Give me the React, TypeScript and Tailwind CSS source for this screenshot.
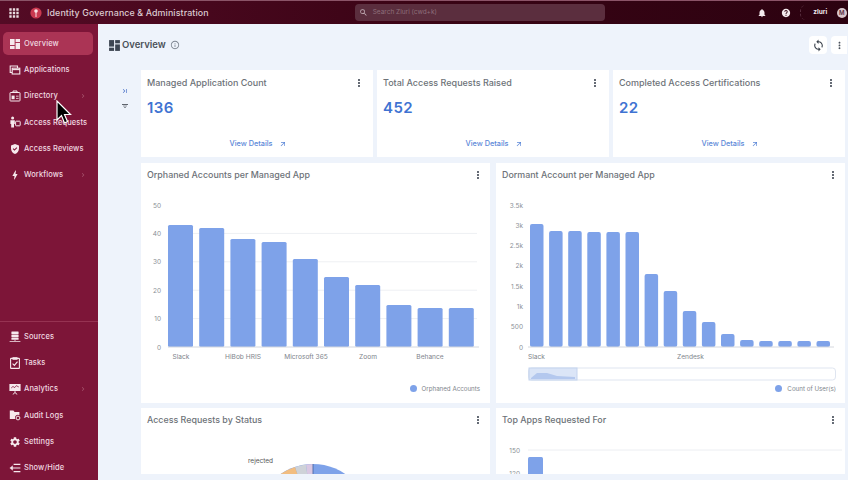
import React from 'react';
import {
  MdApps, MdArrowOutward, MdBolt, MdChevronRight, MdDashboard, MdFilterList,
  MdGppGood, MdHelp, MdInfoOutline, MdLastPage, MdMoreVert, MdNotifications,
  MdSearch, MdSettings, MdSync,
} from 'react-icons/md';

type IconProps = { className?: string };

function AppsIcon({ className }: IconProps) {
  return (
    <svg viewBox="0 0 12 12" className={className} fill="none" stroke="currentColor" strokeWidth="1.1">
      <path d="M3 8.5H1.2V2H8.5V4" />
      <rect x="3.2" y="4.2" width="7.6" height="5.8" fill="#7d1538" />
      <path d="M3.2 5.6H10.8" />
    </svg>
  );
}

function DirectoryIcon({ className }: IconProps) {
  return (
    <svg viewBox="0 0 12 12" className={className} fill="none" stroke="currentColor" strokeWidth="1">
      <path d="M4 2.5V1H8V2.5" />
      <rect x="1" y="2.5" width="10" height="8.5" rx=".6" />
      <rect x="2.6" y="5.6" width="3" height="3.6" fill="currentColor" stroke="none" />
      <path d="M7 6.2H9.6M7 8.4H9.6" strokeWidth=".8" />
    </svg>
  );
}

function RequestsIcon({ className }: IconProps) {
  return (
    <svg viewBox="0 0 12 12" className={className} fill="currentColor">
      <circle cx="3.6" cy="2" r="1.5" />
      <path d="M1.4 4.2H5.8V8H5V11.6H2.2V8H1.4Z" />
      <rect x="6.6" y="5.2" width="4.6" height="4.6" rx=".6" fill="none" stroke="currentColor" strokeWidth="1" />
    </svg>
  );
}

function SourcesIcon({ className }: IconProps) {
  return (
    <svg viewBox="0 0 12 12" className={className} fill="currentColor">
      <rect x="2.4" y=".6" width="7.2" height="2.4" rx=".5" />
      <rect x="2.4" y="3.6" width="7.2" height="2.4" rx=".5" />
      <rect x="2.4" y="6.6" width="7.2" height="2.2" rx=".5" />
      <path d="M5.6 8.8H6.4V10H11.4V10.8H.6V10H5.6Z" />
    </svg>
  );
}

function TasksIcon({ className }: IconProps) {
  return (
    <svg viewBox="0 0 12 12" className={className} fill="none" stroke="currentColor" strokeWidth="1.1">
      <rect x="1.6" y="1.4" width="8.8" height="10" rx=".5" />
      <path d="M4 .8H8V2.2H4Z" fill="currentColor" />
      <path d="M3.6 6.6 5.4 8.4 8.5 4.6" />
    </svg>
  );
}

function AnalyticsIcon({ className }: IconProps) {
  return (
    <svg viewBox="0 0 12 12" className={className} fill="currentColor">
      <path fillRule="evenodd" d="M.4 1H11.6V8H.4ZM2.2 5.6 4 3.8 5.4 5 7.6 3 9.8 4.4V3.8L7.6 2.2 5.4 4.2 4 3 2.2 4.8Z" />
      <path d="M5.6 8H6.4V9.2L8.6 11.4H7.6L6 9.9 4.4 11.4H3.4L5.6 9.2Z" />
    </svg>
  );
}

function AuditIcon({ className }: IconProps) {
  return (
    <svg viewBox="0 0 12 12" className={className} fill="currentColor">
      <path d="M.8 1.6H4.4L5.6 3H10.4V6.2A3 3 0 0 0 6.2 10H.8Z" />
      <circle cx="9" cy="9" r="1.9" fill="none" stroke="currentColor" strokeWidth="1" />
    </svg>
  );
}

function ShowHideIcon({ className }: IconProps) {
  return (
    <svg viewBox="0 0 12 12" className={className} fill="none" stroke="currentColor" strokeWidth="1.2">
      <path d="M4.6 2.4H11.4M3 6H11.4M4.6 9.6H11.4" />
      <path d="M3.6 3.8.8 6 3.6 8.2Z" fill="currentColor" strokeWidth=".4" />
    </svg>
  );
}

function OverviewIcon({ className }: IconProps) {
  return (
    <svg viewBox="0 0 12 12" className={className} fill="currentColor">
      <rect x="1" y="1" width="4.6" height="6" />
      <rect x="1" y="8" width="4.6" height="3" />
      <rect x="6.6" y="1" width="4.4" height="3" />
      <rect x="6.6" y="5" width="4.4" height="6" />
    </svg>
  );
}

const topNav = [
  { label: 'Overview', icon: OverviewIcon, active: true },
  { label: 'Applications', icon: AppsIcon },
  { label: 'Directory', icon: DirectoryIcon, more: true },
  { label: 'Access Requests', icon: RequestsIcon },
  { label: 'Access Reviews', icon: MdGppGood },
  { label: 'Workflows', icon: MdBolt, more: true },
];

const bottomNav = [
  { label: 'Sources', icon: SourcesIcon },
  { label: 'Tasks', icon: TasksIcon },
  { label: 'Analytics', icon: AnalyticsIcon, more: true },
  { label: 'Audit Logs', icon: AuditIcon },
  { label: 'Settings', icon: MdSettings },
  { label: 'Show/Hide', icon: ShowHideIcon },
];

const stats = [
  { title: 'Managed Application Count', value: '136' },
  { title: 'Total Access Requests Raised', value: '452' },
  { title: 'Completed Access Certifications', value: '22' },
];

// bar tops, in px from the top of the chart svg
const orphanedTops = [44, 47, 58, 61, 78, 96, 104, 124, 127, 127];
const orphanedTicks = ['50', '40', '30', '20', '10', '0'];
const orphanedLabels = [
  { x: 34, text: 'Slack' },
  { x: 96, text: 'HiBob HRIS' },
  { x: 159, text: 'Microsoft 365' },
  { x: 221, text: 'Zoom' },
  { x: 283, text: 'Behance' },
];

const dormantTops = [43, 50, 50, 51, 51, 51, 93, 110, 130, 141, 153, 159, 160, 160, 160, 160];
const dormantTicks = ['3.5k', '3k', '2.5k', '2k', '1.5k', '1k', '500', '0'];

type NavItemProps = { label: string; icon: React.ElementType; active?: boolean; more?: boolean };

function NavItem({ label, icon: Icon, active, more }: NavItemProps) {
  return (
    <div className={`flex h-[23px] items-center rounded-[5px] pl-[6px] pr-[6px] ${active ? 'bg-[#ab3455]' : ''}`}>
      <Icon className="h-[12px] w-[12px] shrink-0 text-[#f6e9ed]" />
      <span className="ml-[3px] flex-1 whitespace-nowrap text-[7.5px] font-medium tracking-[0.1px] text-[#f0d9e0]">{label}</span>
      {more && <MdChevronRight className="h-[8px] w-[8px] text-[#a8566f]" />}
    </div>
  );
}

function Kebab() {
  return <MdMoreVert className="h-[12px] w-[12px] shrink-0 text-[#444b57]" />;
}

function StatCard({ title, value }: { title: string; value: string }) {
  return (
    <div className="flex h-[87px] flex-col bg-white pl-[6px] pr-[8px] pt-[6px]">
      <div className="flex items-center justify-between">
        <span className="whitespace-nowrap text-[9px] font-medium text-[#6d7278]">{title}</span>
        <Kebab />
      </div>
      <div className="mt-[8px] text-[15px] font-semibold leading-[20px] tracking-[0.4px] text-[#3f73d2]">{value}</div>
      <div className="mt-[21px] flex items-center justify-center gap-[6px] pl-[4px]">
        <span className="text-[7.3px] font-medium text-[#5c88d8]">View Details</span>
        <MdArrowOutward className="h-[8px] w-[8px] text-[#5c88d8]" />
      </div>
    </div>
  );
}

function OrphanedChart() {
  return (
    <svg width="340" height="204" className="block" fontFamily="Inter, sans-serif">
      {orphanedTicks.map((t, i) => {
        const y = 24 + i * 28.4;
        return (
          <g key={t}>
            {i > 0 && i < 5 && <line x1="21" x2="330" y1={y} y2={y} stroke="#eef0f3" strokeWidth="1" />}
            <text x="14" y={y + 2.5} textAnchor="end" fontSize="6.5" fill="#8a8f96">{t}</text>
          </g>
        );
      })}
      {orphanedTops.map((top, i) => (
        <rect key={i} x={21 + i * 31.2} y={top} width="25" height={166 - top} rx="1.5" fill="#7ea2e9" />
      ))}
      <line x1="21" x2="332" y1="166" y2="166" stroke="#d5d8de" strokeWidth="1" />
      {orphanedLabels.map((l) => (
        <text key={l.text} x={l.x} y={178} textAnchor="middle" fontSize="6.6" fill="#80858c">{l.text}</text>
      ))}
    </svg>
  );
}

function DormantChart() {
  return (
    <svg width="340" height="204" className="block" fontFamily="Inter, sans-serif">
      {dormantTicks.map((t, i) => (
        <text key={t} x="21" y={26.5 + i * 20.3} textAnchor="end" fontSize="6.5" fill="#8a8f96">{t}</text>
      ))}
      {dormantTops.map((top, i) => (
        <rect key={i} x={28 + i * 19.1} y={top} width="13.5" height={166 - top} rx="2" fill="#7ea2e9" />
      ))}
      <line x1="26" x2="332" y1="166" y2="166" stroke="#d5d8de" strokeWidth="1" />
      <text x="26" y="178" fontSize="6.6" fill="#80858c">Slack</text>
      <text x="175" y="178" fontSize="6.6" fill="#80858c">Zendesk</text>
      <rect x="26.5" y="187" width="307" height="12" rx="3" fill="#fff" stroke="#dfe5f0" />
      <rect x="27" y="187" width="48" height="12" fill="#dbe5f7" stroke="#c4d3ee" />
      <path d="M29 197 L35 192 L45 192 L55 195 L73 196 L73 198 L29 198 Z" fill="#b4c8ee" />
    </svg>
  );
}

function Legend({ label, right }: { label: string; right: string }) {
  return (
    <div className={`flex items-center justify-end gap-[5px] ${right}`}>
      <span className="h-[7px] w-[7px] rounded-full bg-[#7ea2e9]" />
      <span className="text-[6.2px] leading-[7px] text-[#80858c]">{label}</span>
    </div>
  );
}

function ChartCard({ title, children }: { title: string; children?: React.ReactNode }) {
  return (
    <div className="flex h-[240px] flex-col bg-white pl-[6px] pr-[6px] pt-[6px]">
      <div className="flex h-[12px] items-center justify-between">
        <span className="whitespace-nowrap text-[8.9px] font-medium text-[#6d7278]">{title}</span>
        <Kebab />
      </div>
      {children}
    </div>
  );
}

export default function App() {
  return (
    <div className="relative flex h-[480px] w-[848px] flex-col overflow-hidden bg-[#eef3fb] font-['Inter',sans-serif]">
      {/* Header */}
      <header className="flex h-[24px] shrink-0 items-center border-t border-[#8b5468] bg-gradient-to-r from-[#540b25] via-[#3a0415] to-[#2c0210] pl-[7px] pr-[1px]">
        <MdApps className="h-[14px] w-[14px] text-[#eadde1]" />
        <svg viewBox="0 0 12 12" className="ml-[9px] h-[12px] w-[12px]">
          <circle cx="6" cy="6" r="5.6" fill="#c9384f" />
          <circle cx="6" cy="4" r="1.8" fill="#fbe3e6" />
          <path d="M6 4V10" stroke="#fbe3e6" strokeWidth="1" fill="none" />
        </svg>
        <span className="ml-[5px] whitespace-nowrap text-[8.9px] font-medium tracking-[0.1px] text-[#dccbd1]">Identity Governance &amp; Administration</span>
        <div className="ml-[146px] flex h-[17px] w-[250px] items-center rounded-[4px] bg-[#5b2e3e] pl-[4px]">
          <MdSearch className="h-[9px] w-[9px] text-[#c8b4bc]" />
          <span className="ml-[5px] text-[6.5px] text-[#8e6f7b]">Search Zluri (cwd+k)</span>
        </div>
        <MdNotifications className="ml-[152px] h-[10px] w-[10px] text-[#f3eaed]" />
        <MdHelp className="ml-[14px] h-[10px] w-[10px] text-[#f3eaed]" />
        <div className="ml-[9px] flex h-[15px] w-[32px] items-center justify-center rounded-l-[6px] border-l border-dashed border-[#5a3040]">
          <span className="pl-[8px] text-[6.5px] font-bold text-[#f3eaed]">zluri</span>
        </div>
        <div className="ml-[5px] flex h-[10px] w-[10px] shrink-0 items-center justify-center rounded-full bg-[#d9c6cc] text-[6px] font-semibold text-[#5b2e3e]">M</div>
      </header>

      <div className="flex min-h-0 flex-1">
        {/* Sidebar */}
        <aside className="flex w-[98px] shrink-0 flex-col justify-between bg-[#7d1538] pb-[0.5px] pl-[3px] pr-[5px] pt-[8px]">
          <nav className="flex flex-col gap-[3.3px]">
            {topNav.map((item) => (
              <NavItem key={item.label} {...item} />
            ))}
          </nav>
          <nav className="-ml-[3px] -mr-[5px] flex flex-col gap-[3.3px] border-t border-[#963252] pl-[3px] pr-[5px] pt-[3px]">
            {bottomNav.map((item) => (
              <NavItem key={item.label} {...item} />
            ))}
          </nav>
        </aside>

        {/* Main */}
        <main className="flex min-w-0 flex-1 flex-col pb-[6px]">
          <div className="flex h-[46px] shrink-0 items-center pb-[4px] pl-[10px] pr-[1px]">
            <OverviewIcon className="h-[13px] w-[13px] text-[#3d4652]" />
            <span className="ml-[1px] text-[9.5px] font-semibold text-[#4a5058]">Overview</span>
            <MdInfoOutline className="ml-[4px] h-[10px] w-[10px] text-[#7d8590]" />
            <div className="ml-auto flex h-[18px] w-[18px] items-center justify-center rounded-[4px] bg-white">
              <MdSync className="h-[13px] w-[13px] text-[#39404a]" />
            </div>
            <div className="ml-[4px] flex h-[18px] w-[16px] items-center justify-center rounded-l-[4px] bg-white">
              <MdMoreVert className="h-[11px] w-[11px] text-[#4b525c]" />
            </div>
          </div>

          <div className="flex min-h-0 flex-1 overflow-hidden">
            <div className="flex w-[43px] shrink-0 flex-col items-center pl-[11px] pt-[17px]">
              <MdLastPage className="h-[8px] w-[8px] text-[#4a72c8]" />
              <MdFilterList className="mt-[7px] h-[8px] w-[8px] text-[#30363f]" />
            </div>
            <div className="flex min-w-0 flex-1 flex-col gap-[6px] pr-[3px]">
              <div className="grid grid-cols-3 gap-[4px]">
                {stats.map((s) => (
                  <StatCard key={s.title} {...s} />
                ))}
              </div>
              <div className="grid grid-cols-2 gap-x-[6px] gap-y-[5px]">
                <ChartCard title="Orphaned Accounts per Managed App">
                  <OrphanedChart />
                  <Legend label="Orphaned Accounts" right="pr-[4px]" />
                </ChartCard>
                <ChartCard title="Dormant Account per Managed App">
                  <DormantChart />
                  <Legend label="Count of User(s)" right="pr-[3px]" />
                </ChartCard>
                <ChartCard title="Access Requests by Status">
                  <svg width="340" height="70" className="block" fontFamily="Inter, sans-serif">
                    <text x="101" y="37" fontSize="6.5" fill="#555">rejected</text>
                    <circle cx="166" cy="95" r="57" fill="#7ea2e9" />
                    <path d="M166 95 L166 38 A57 57 0 0 0 159 38.5Z" fill="#d9c7e2" />
                    <path d="M166 95 L159 38.5 A57 57 0 0 0 148 41Z" fill="#ced2d8" />
                    <path d="M166 95 L148 41 A57 57 0 0 0 120 61Z" fill="#f2bd80" />
                    <line x1="166" x2="166" y1="38" y2="70" stroke="#3f5f9e" strokeWidth="0.8" />
                  </svg>
                </ChartCard>
                <ChartCard title="Top Apps Requested For">
                  <svg width="340" height="70" className="block" fontFamily="Inter, sans-serif">
                    <line x1="26" x2="340" y1="24" y2="24" stroke="#eceef2" />
                    <text x="18" y="26.5" textAnchor="end" fontSize="6.5" fill="#8a8f96">150</text>
                    <text x="18" y="50" textAnchor="end" fontSize="6.5" fill="#8a8f96">120</text>
                    <rect x="26" y="31" width="15" height="40" rx="1.5" fill="#7ea2e9" />
                  </svg>
                </ChartCard>
              </div>
            </div>
          </div>
        </main>
      </div>

      {/* Mouse pointer */}
      <svg viewBox="0 0 16 26" className="absolute left-[56px] top-[100px] h-[26px] w-[16px]">
        <path d="M1 1 V20 L5.5 15.5 L8.5 23 L11.5 21.5 L8.5 14.5 L14.5 14.5 Z" fill="#000" stroke="#fff" strokeWidth="1.2" />
      </svg>
    </div>
  );
}
